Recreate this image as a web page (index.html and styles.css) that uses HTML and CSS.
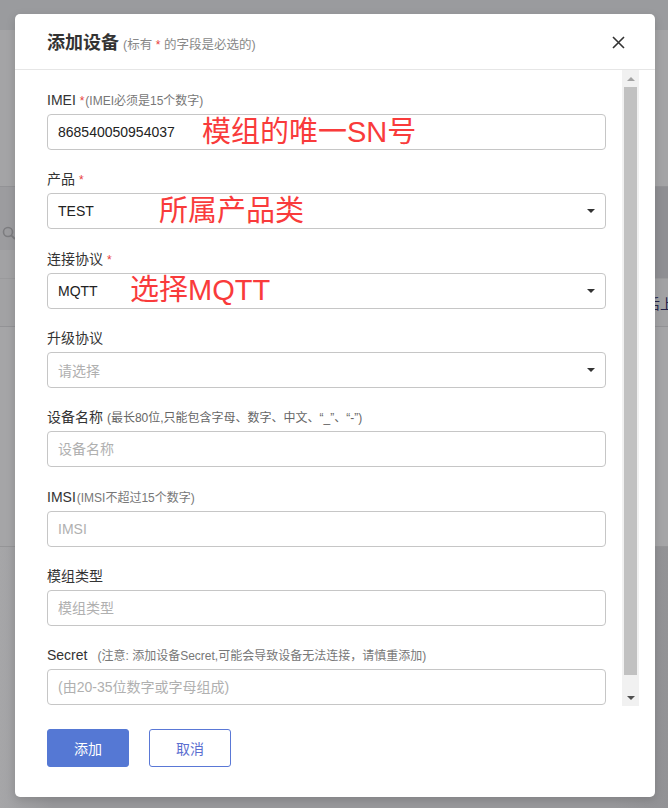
FILE: index.html
```html
<!DOCTYPE html>
<html lang="zh-CN">
<head>
<meta charset="utf-8">
<title>添加设备</title>
<link rel="stylesheet" href="styles.css">
</head>
<body>
<div class="page">
  <div class="band b-top"></div>
  <div class="band b-head"></div>
  <div class="band b-search">
    <svg class="bg-search" width="14" height="14" viewBox="0 0 14 14"><circle cx="6" cy="6" r="4.5" fill="none" stroke="#7d7d80" stroke-width="1.6"/><line x1="9.3" y1="9.3" x2="13" y2="13" stroke="#7d7d80" stroke-width="1.8"/></svg>
  </div>
  <div class="band b-mid"></div>
  <div class="band b-row"><span class="bg-text">最后上线</span></div>
  <div class="band b-list"></div>
  <div class="band b-foot"></div>
</div>

<div class="modal">
  <div class="modal-header">
    <h2 class="modal-title">添加设备 <small class="title-hint">(标有 <span class="req">*</span> 的字段是必选的)</small></h2>
    <button class="close" type="button" aria-label="关闭">
      <svg width="13" height="13" viewBox="0 0 13 13"><path d="M1 1 L12 12 M12 1 L1 12" stroke="#333" stroke-width="1.6" fill="none"/></svg>
    </button>
  </div>

  <div class="modal-body">
    <div class="scroll-content">
      <div class="form-group">
        <label class="label">IMEI <span class="req">*</span><span class="hint">(IMEI必须是15个数字)</span></label>
        <div class="control-wrap">
          <input class="form-control" type="text" value="868540050954037">
          <span class="note note-imei">模组的唯一SN号</span>
        </div>
      </div>

      <div class="form-group">
        <label class="label">产品 <span class="req">*</span></label>
        <div class="control-wrap">
          <div class="form-control select"><span class="value">TEST</span><i class="caret"></i></div>
          <span class="note note-product">所属产品类</span>
        </div>
      </div>

      <div class="form-group">
        <label class="label">连接协议 <span class="req">*</span></label>
        <div class="control-wrap">
          <div class="form-control select"><span class="value">MQTT</span><i class="caret"></i></div>
          <span class="note note-proto">选择MQTT</span>
        </div>
      </div>

      <div class="form-group">
        <label class="label">升级协议</label>
        <div class="control-wrap">
          <div class="form-control select"><span class="placeholder">请选择</span><i class="caret"></i></div>
        </div>
      </div>

      <div class="form-group">
        <label class="label">设备名称 <span class="hint hint-dark">(最长80位,只能包含字母、数字、中文、“_”、“-”)</span></label>
        <div class="control-wrap">
          <input class="form-control" type="text" placeholder="设备名称">
        </div>
      </div>

      <div class="form-group">
        <label class="label">IMSI<span class="hint">(IMSI不超过15个数字)</span></label>
        <div class="control-wrap">
          <input class="form-control" type="text" placeholder="IMSI">
        </div>
      </div>

      <div class="form-group">
        <label class="label">模组类型</label>
        <div class="control-wrap">
          <input class="form-control" type="text" placeholder="模组类型">
        </div>
      </div>

      <div class="form-group">
        <label class="label">Secret<span class="hint hint-secret">(注意: 添加设备Secret,可能会导致设备无法连接，请慎重添加)</span></label>
        <div class="control-wrap">
          <input class="form-control" type="text" placeholder="(由20-35位数字或字母组成)">
        </div>
      </div>
    </div>

    <div class="scrollbar">
      <div class="sb-btn"><i class="arrow-up"></i></div>
      <div class="sb-track"><div class="sb-thumb"></div></div>
      <div class="sb-btn"><i class="arrow-down"></i></div>
    </div>
  </div>

  <div class="modal-footer">
    <button class="btn btn-primary" type="button">添加</button>
    <button class="btn btn-default" type="button">取消</button>
  </div>
</div>
</body>
</html>
```

FILE: styles.css
```css
* { box-sizing: border-box; }

html, body {
  margin: 0;
  padding: 0;
}

body {
  width: 668px;
  height: 808px;
  overflow: hidden;
  position: relative;
  font-family: "Liberation Sans", Arial, "Noto Sans CJK SC", sans-serif;
  font-size: 14px;
  color: #333;
  background: #a3a3a5;
}

/* dimmed page behind the dialog */
.page {
  display: flex;
  flex-direction: column;
  height: 808px;
}
.band { flex: none; }
.b-top { height: 30px; background: #9a9b9e; }
.b-head { height: 157px; background: #a4a4a6; border-bottom: 1px solid #939396; }
.b-search {
  height: 63px;
  background: linear-gradient(to right, #9c9c9f 50%, #8f8f93 50%);
  padding: 39px 0 0 2px;
}
.bg-search { display: block; }
.b-mid {
  height: 28px;
  background: linear-gradient(to right, #a2a2a4 50%, #8f8f93 50%);
}
.b-row {
  height: 49px;
  background: #a2a2a4;
  border-bottom: 1px solid #939396;
  border-top: 1px solid #9a9a9c;
  padding-left: 632px;
  white-space: nowrap;
  overflow: hidden;
  display: flex;
  align-items: center;
  font-family: "Noto Sans CJK SC", sans-serif;
  font-size: 14px;
  color: #23234a;
}
.b-list { height: 220px; background: #a5a5a7; border-bottom: 1px solid #959597; }
.b-foot { flex: 1; background: linear-gradient(to right, #a6a6a8, #98989b 8%, #98989b 92%, #929295); }

/* dialog */
.modal {
  position: absolute;
  left: 15px;
  top: 14px;
  width: 640px;
  height: 783px;
  background: #fff;
  border-radius: 5px;
  box-shadow: 0 3px 10px rgba(0, 0, 0, 0.15);
  display: flex;
  flex-direction: column;
}

.modal-header {
  flex: none;
  height: 56px;
  padding: 2px 30px 0 32px;
  border-bottom: 1px solid #e6e6e6;
  display: flex;
  align-items: center;
}

.modal-title {
  margin: 0;
  font-family: "Noto Sans CJK SC", sans-serif;
  font-size: 18px;
  font-weight: 700;
  line-height: 24px;
  color: #333;
}

.title-hint {
  font-family: "Liberation Sans", Arial, "Noto Sans CJK SC", sans-serif;
  font-size: 12.5px;
  font-weight: 400;
  color: #888;
}

.close {
  margin-left: auto;
  padding: 0;
  border: 0;
  background: none;
  width: 13px;
  height: 13px;
  display: flex;
}

.req { color: #e8403c; font-size: 12px; }

.modal-body {
  flex: none;
  height: 636px;
  display: flex;
}

.scroll-content {
  flex: 1;
  overflow: hidden;
  padding: 20px 16px 0 32px;
}

.form-group { margin-bottom: 19.33px; }

.label {
  display: block;
  height: 20px;
  line-height: 20px;
  margin-bottom: 4px;
  font-size: 14px;
  color: #333;
  white-space: nowrap;
}

.hint {
  font-size: 12px;
  line-height: 12px;
  color: #777;
  margin-left: 1px;
}
.label .req { line-height: 12px; }
.hint-dark { color: #666; margin-left: 0; }
.hint-secret { margin-left: 10px; }

.control-wrap { position: relative; }

.form-control {
  display: flex;
  align-items: center;
  width: 100%;
  height: 36px;
  margin: 0;
  padding: 0 10px;
  border: 1px solid #c6c6c6;
  border-radius: 4px;
  background: #fff;
  font-family: "Liberation Sans", Arial, "Noto Sans CJK SC", sans-serif;
  font-size: 14px;
  color: #222;
  outline: none;
}
.form-control::placeholder { color: #b0b0b0; }
.placeholder { color: #b0b0b0; }

.select .caret {
  margin-left: auto;
  width: 0;
  height: 0;
  border-left: 4px solid transparent;
  border-right: 4px solid transparent;
  border-top: 4px solid #333;
}

/* red annotations drawn over the inputs */
.note {
  position: absolute;
  top: 0;
  bottom: 0;
  display: flex;
  align-items: center;
  font-family: "Liberation Sans", Arial, "Noto Sans CJK SC", sans-serif;
  font-size: 29px;
  line-height: 1;
  color: #f93b3b;
  white-space: nowrap;
}
.note-imei { left: 155px; }
.note-product { left: 112px; }
.note-proto { left: 83px; }

/* scrollbar */
.scrollbar {
  flex: none;
  width: 17px;
  margin-right: 16px;
  background: #f1f1f1;
  display: flex;
  flex-direction: column;
}
.sb-btn {
  flex: none;
  height: 17px;
  display: flex;
  align-items: center;
  justify-content: center;
}
.arrow-up {
  width: 0; height: 0;
  border-left: 4px solid transparent;
  border-right: 4px solid transparent;
  border-bottom: 4px solid #a3a3a3;
}
.arrow-down {
  width: 0; height: 0;
  border-left: 4px solid transparent;
  border-right: 4px solid transparent;
  border-top: 4px solid #505050;
}
.sb-track { flex: 1; padding: 0 2px; }
.sb-thumb { height: 588px; background: #c1c1c1; }

/* footer */
.modal-footer {
  flex: none;
  display: flex;
  gap: 20px;
  padding: 23px 32px 0;
}

.btn {
  width: 82px;
  height: 38px;
  border-radius: 3px;
  font-family: "Noto Sans CJK SC", sans-serif;
  font-size: 14px;
  padding: 0;
  cursor: pointer;
}
.btn-primary {
  background: #5578d4;
  border: 1px solid #5578d4;
  color: #fff;
}
.btn-default {
  background: #fff;
  border: 1px solid #5a78d6;
  color: #5a6ed0;
}
```
